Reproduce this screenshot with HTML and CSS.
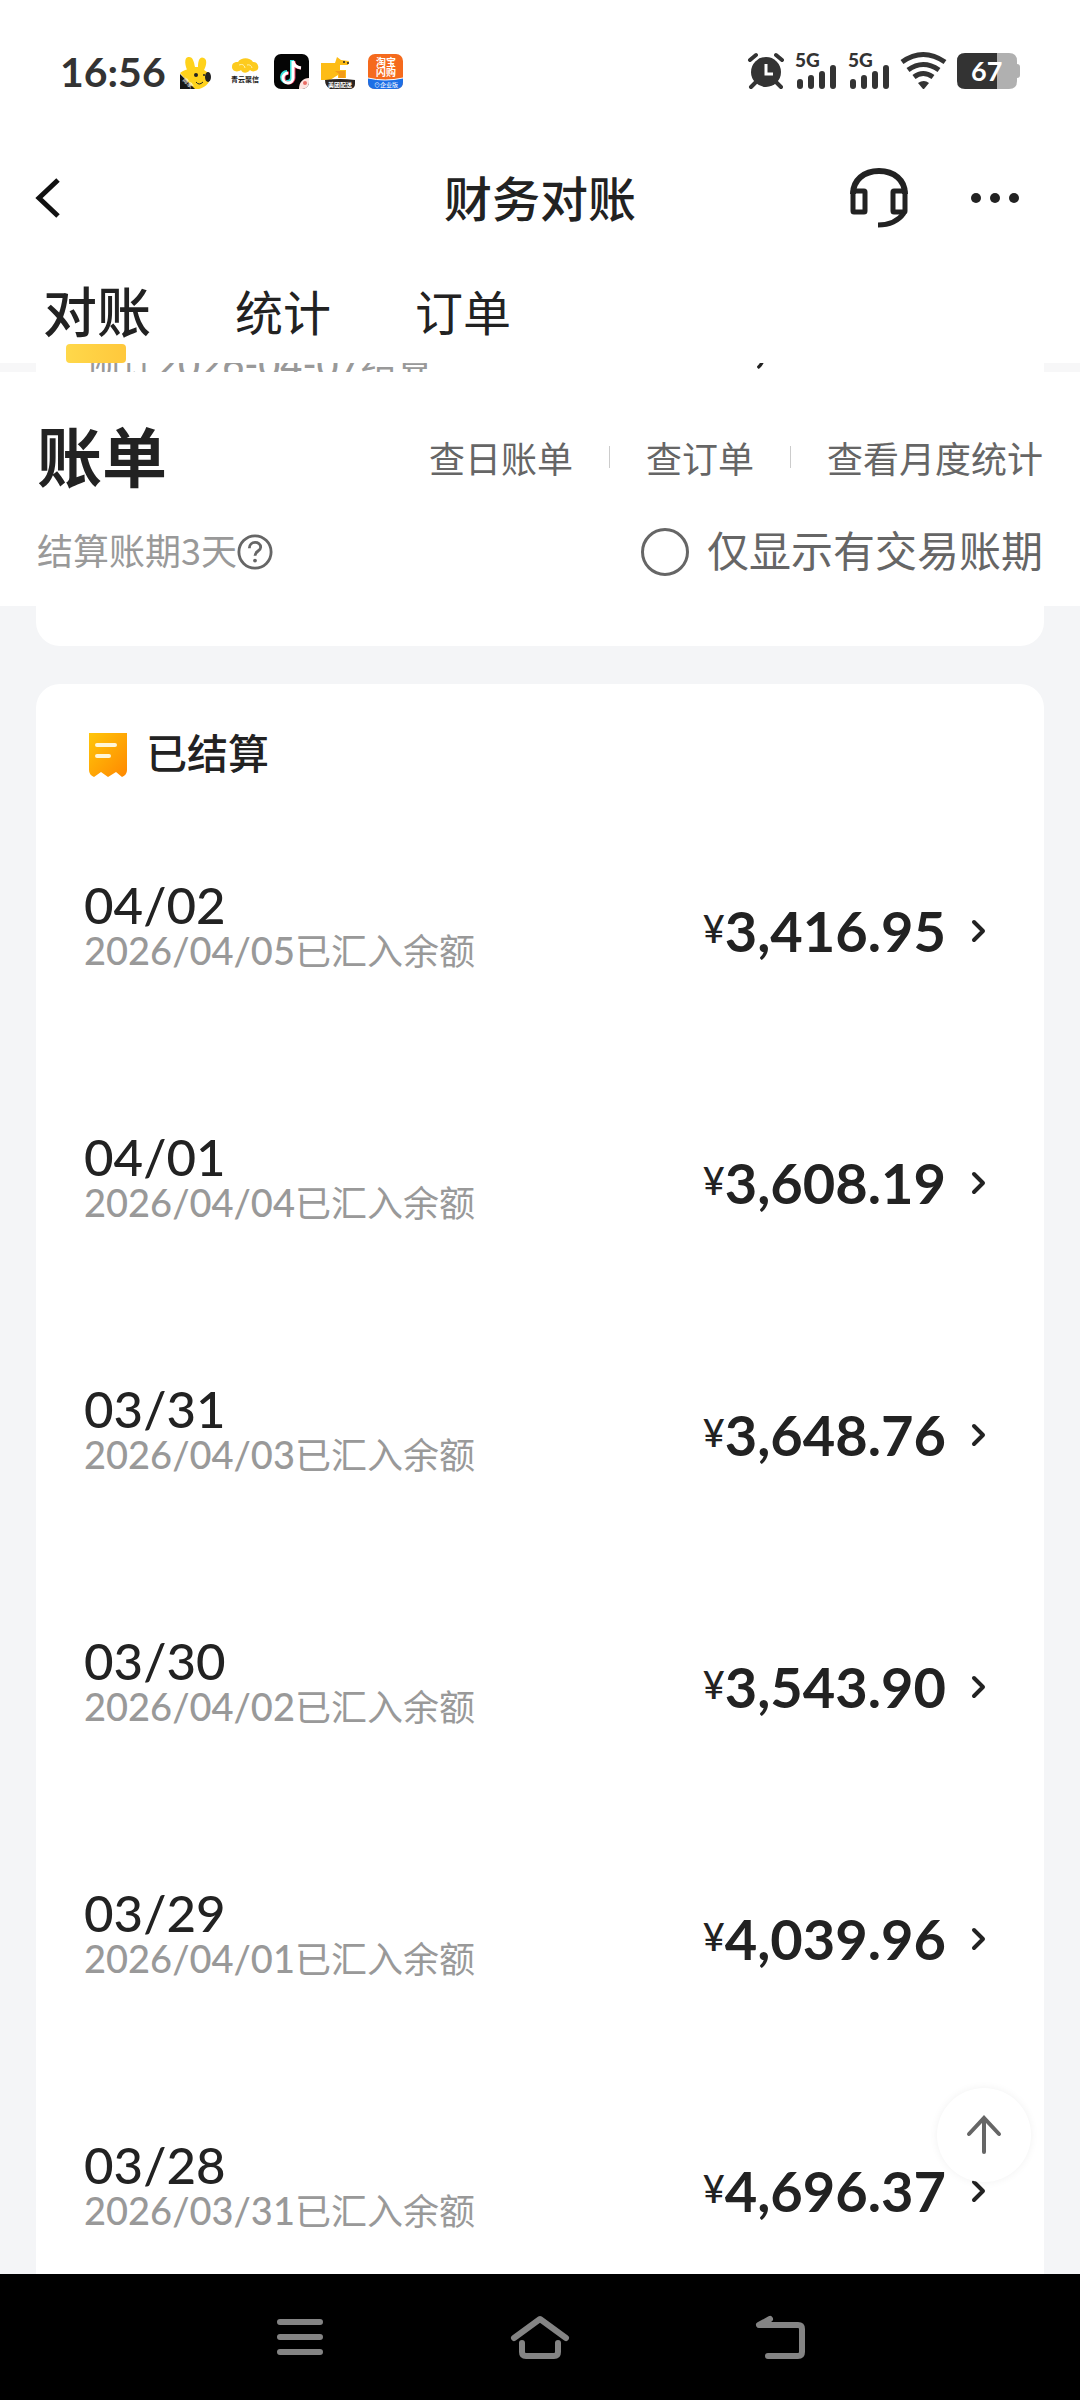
FILE: index.html
```html
<!DOCTYPE html>
<html lang="zh-CN">
<head>
    <meta charset="UTF-8">
    <meta name="viewport" content="width=device-width, initial-scale=1.0">
    <title>财务对账</title>
    <link rel="stylesheet" href="styles.css">
</head>
<body>

<!-- 状态栏 -->
<div class="status-bar">
    <span class="time">16:56</span>
    <div class="app-icons">
        <svg width="35" height="35" viewBox="0 0 35 35">
            <path d="M9 19C4 12 4 2 9 3c4 0 5 5 6 10h3C18 6 20 2 24 4c4 2 2 9-1 14z" fill="#ffd21c"/>
            <path d="M0 19c6-5 20-7 27-1 4 4 5 13-8 17h-5z" fill="#ffd21c"/>
            <ellipse cx="28" cy="23" rx="3" ry="5" fill="#222"/>
            <circle cx="16" cy="21" r="2" fill="#222"/>
            <circle cx="24" cy="21" r="1" fill="#222"/>
            <path d="M16 28q3 4 7 0" fill="none" stroke="#222" stroke-width="1"/>
            <path d="M0 20l15 15H0z" fill="#151515"/>
            <text x="2" y="27" font-size="6" fill="#fff" transform="rotate(45 3 27)">商家</text>
        </svg>
        <svg width="35" height="35" viewBox="0 0 35 35">
            <path d="M5 13c0-5 4-5 6-5 3-5 12-5 15 0 5-1 8 8 2 9-2 1-4 0-5-1-3 4-8 3-9 0-4 3-9 1-9-3z" fill="#fdcb1e"/>
            <path d="M12 11q5-2 6 3m2-3q4-1 5 3" fill="none" stroke="#fff1a8" stroke-width="1"/>
            <text x="4" y="28" font-size="7" font-weight="700" fill="#222">青云聚信</text>
        </svg>
        <svg width="35" height="35" viewBox="0 0 35 35">
            <rect width="35" height="35" rx="7" fill="#050505"/>
            <path d="M18 6v17a5 5 0 1 1-5-5" fill="none" stroke="#35e0dd" stroke-width="4"/>
            <path d="M20 7v17a5 5 0 1 1-5-5M20 8q1 6 7 6" fill="none" stroke="#f0365b" stroke-width="3"/>
            <path d="M19 7v17a5 5 0 1 1-5-5M19 7q1 6 8 7" fill="none" stroke="#fff" stroke-width="3"/>
            <path d="M25 35c0-7 4-11 10-11v4c0 4-3 7-7 7z" fill="#fde5e1"/>
            <circle cx="31" cy="29" r="2" fill="#ea6d65"/>
        </svg>
        <svg width="35" height="35" viewBox="0 0 35 35">
            <path d="M0 9h14l2-6 4 3 8 1-1 4h-8v5h6v8h-8v-3l-8 5H0z" fill="#fdbc16"/>
            <path d="M14 17h10v7h-6v-4z" fill="#f39b17"/>
            <circle cx="23" cy="8" r="1" fill="#222"/>
            <circle cx="27" cy="9" r="1" fill="#222"/>
            <path d="M4 26q15-2 30 0v4q0 5-6 5H9q-5-3-5-9z" fill="#2a2422"/>
            <text x="7" y="33" font-size="6" font-weight="700" fill="#fff">美团配送</text>
        </svg>
        <svg width="35" height="35" viewBox="0 0 35 35">
            <rect width="35" height="35" rx="7" fill="#f56a1d"/>
            <path d="M0 24q17 4 35 0v4q0 7-7 7H7q-7 0-7-7z" fill="#1d6fe6"/>
            <path d="M0 24q17 4 35 0" fill="none" stroke="#fff" stroke-width="1"/>
            <text x="8" y="12" font-size="10" font-weight="700" fill="#fff">淘宝</text>
            <text x="8" y="22" font-size="10" font-weight="700" fill="#fff">闪购</text>
            <text x="6" y="33" font-size="6" fill="#fff">⊙企业版</text>
        </svg>
    </div>
    <div class="sys-icons">
        <svg width="36" height="36" viewBox="0 0 36 36">
            <path d="M2 7l6-5M34 7l-6-5M3 34l6-6M33 34l-6-6" stroke="#333" stroke-width="4" stroke-linecap="round"/>
            <circle cx="18" cy="19" r="15" fill="#333"/>
            <path d="M18 11v10h7" fill="none" stroke="#fff" stroke-width="3"/>
        </svg>
        <svg width="42" height="36" viewBox="0 0 42 36">
            <text x="0" y="14" font-size="19" font-weight="900" fill="#333">5G</text>
            <path d="M5 29v4M16 25v8M27 21v12M38 15v18" stroke="#333" stroke-width="6" stroke-linecap="round"/>
        </svg>
        <svg width="42" height="36" viewBox="0 0 42 36">
            <text x="0" y="14" font-size="19" font-weight="900" fill="#333">5G</text>
            <path d="M5 29v4M16 25v8M27 21v12M38 15v18" stroke="#333" stroke-width="6" stroke-linecap="round"/>
        </svg>
        <svg width="45" height="36" viewBox="0 0 45 36">
            <path d="M1 9q21-15 43 0M7 17q15-11 31 0M13 24q9-7 19 0" fill="none" stroke="#333" stroke-width="5"/>
            <path d="M17 30q6-4 11 0l-5 6h-1z" fill="#333"/>
        </svg>
        <svg width="63" height="36" viewBox="0 0 63 36">
            <path d="M40 0h12q8 0 8 8v3q3 0 3 3v8q0 3-3 3v3q0 8-8 8H40z" fill="#b0b0b0"/>
            <path d="M8 0h32v36H8q-8 0-8-8V8q0-8 8-8z" fill="#333"/>
            <text x="14" y="28" font-size="27" font-weight="700" fill="#fff">67</text>
        </svg>
    </div>
</div>

<!-- 标题栏 -->
<header class="header">
    <button class="icon-btn" aria-label="返回">
        <svg width="24" height="40" viewBox="0 0 24 40"><path d="M22 2L3 20l19 18" fill="none" stroke="#111" stroke-width="5"/></svg>
    </button>
    <h1>财务对账</h1>
    <div class="header-actions">
        <button class="icon-btn" aria-label="客服">
            <svg width="58" height="60" viewBox="0 0 58 60" fill="none" stroke="#222">
                <path d="M3 26C3 12 14 3 29 3s26 9 26 23" stroke-width="6"/>
                <rect x="3" y="23" width="12" height="21" rx="1" stroke-width="5"/>
                <rect x="43" y="23" width="12" height="21" rx="1" stroke-width="5"/>
                <path d="M54 45c-5 7-14 12-26 12" stroke-width="5"/>
            </svg>
        </button>
        <button class="icon-btn" aria-label="更多">
            <svg width="50" height="12" viewBox="0 0 50 12" fill="#222"><circle cx="6" cy="6" r="5"/><circle cx="25" cy="6" r="5"/><circle cx="44" cy="6" r="5"/></svg>
        </button>
    </div>
</header>

<!-- 标签页 -->
<nav class="tabs">
    <button class="tab active">对账</button>
    <button class="tab">统计</button>
    <button class="tab">订单</button>
</nav>

<!-- 被遮住的上一行 -->
<div class="peek">
    <div class="card">
        <div class="row">
            <div class="info">
                <span class="date">04/04</span>
                <span class="note">预计<span class="num">2026-04-07</span>结算</span>
            </div>
            <div class="amount"><small>¥</small>4,168.30</div>
        </div>
    </div>
</div>

<section class="bill-head">
    <div class="bill-top">
        <h2>账单</h2>
        <div class="links">
            <a href="#">查日账单</a>
            <a href="#">查订单</a>
            <a href="#">查看月度统计</a>
        </div>
    </div>
    <div class="bill-sub">
        <div class="period">
            <span class="text">结算账期3天</span>
            <button class="icon-btn" aria-label="说明">
                <svg width="36" height="36" viewBox="0 0 38 38" fill="none" stroke="#666" stroke-width="3">
                    <circle cx="19" cy="19" r="17"/>
                    <path d="M13 15c0-8 12-8 12-1 0 4-6 4-6 9"/>
                    <circle cx="19" cy="28" r="2" fill="#666" stroke="none"/>
                </svg>
            </button>
        </div>
        <label class="only-trade" for="onlyTrade">
            <input type="checkbox" id="onlyTrade">
            <span class="text">仅显示有交易账期</span>
        </label>
    </div>
</section>

<!-- 账单列表 -->
<main class="content">
    <div class="card card-end"></div>
    <div class="card">
        <div class="card-title">
            <svg width="40" height="46" viewBox="0 0 40 46">
                <defs>
                    <linearGradient id="receipt" x1="0" y1="0" x2="1" y2="1">
                        <stop offset="0" stop-color="#ffc60a"/>
                        <stop offset="1" stop-color="#ff8800"/>
                    </linearGradient>
                </defs>
                <path d="M1 1h38v37q0 5-5 7l-6-5-8 5-7-5-7 5q-5-2-5-7z" fill="url(#receipt)"/>
                <path d="M9 13h18M9 24h12" stroke="#fff6d8" stroke-width="4" stroke-linecap="round"/>
            </svg>
            <h3>已结算</h3>
        </div>
        <a class="row" href="#">
            <div class="info">
                <span class="date">04/02</span>
                <span class="note"><span class="num">2026/04/05</span>已汇入余额</span>
            </div>
            <div class="amount"><small>¥</small>3,416.95</div>
            <svg class="arrow" width="16" height="24" viewBox="0 0 16 24"><path d="M3 3l9 9-9 9"/></svg>
        </a>
        <a class="row" href="#">
            <div class="info">
                <span class="date">04/01</span>
                <span class="note"><span class="num">2026/04/04</span>已汇入余额</span>
            </div>
            <div class="amount"><small>¥</small>3,608.19</div>
            <svg class="arrow" width="16" height="24" viewBox="0 0 16 24"><path d="M3 3l9 9-9 9"/></svg>
        </a>
        <a class="row" href="#">
            <div class="info">
                <span class="date">03/31</span>
                <span class="note"><span class="num">2026/04/03</span>已汇入余额</span>
            </div>
            <div class="amount"><small>¥</small>3,648.76</div>
            <svg class="arrow" width="16" height="24" viewBox="0 0 16 24"><path d="M3 3l9 9-9 9"/></svg>
        </a>
        <a class="row" href="#">
            <div class="info">
                <span class="date">03/30</span>
                <span class="note"><span class="num">2026/04/02</span>已汇入余额</span>
            </div>
            <div class="amount"><small>¥</small>3,543.90</div>
            <svg class="arrow" width="16" height="24" viewBox="0 0 16 24"><path d="M3 3l9 9-9 9"/></svg>
        </a>
        <a class="row" href="#">
            <div class="info">
                <span class="date">03/29</span>
                <span class="note"><span class="num">2026/04/01</span>已汇入余额</span>
            </div>
            <div class="amount"><small>¥</small>4,039.96</div>
            <svg class="arrow" width="16" height="24" viewBox="0 0 16 24"><path d="M3 3l9 9-9 9"/></svg>
        </a>
        <a class="row" href="#">
            <div class="info">
                <span class="date">03/28</span>
                <span class="note"><span class="num">2026/03/31</span>已汇入余额</span>
            </div>
            <div class="amount"><small>¥</small>4,696.37</div>
            <svg class="arrow" width="16" height="24" viewBox="0 0 16 24"><path d="M3 3l9 9-9 9"/></svg>
        </a>
    </div>
    <button class="to-top" aria-label="回到顶部">
        <svg width="36" height="40" viewBox="0 0 36 40" fill="none" stroke="#666" stroke-width="4" stroke-linecap="round"><path d="M18 37V3M3 19L18 3l15 16"/></svg>
    </button>
</main>

<!-- 系统导航 -->
<footer class="nav-bar">
    <button class="icon-btn" aria-label="菜单">
        <svg width="46" height="44" viewBox="0 0 46 44"><path d="M3 7h40M3 22h40M3 37h40"/></svg>
    </button>
    <button class="icon-btn" aria-label="主页">
        <svg width="58" height="44" viewBox="0 0 58 44"><path d="M3 23L29 4l26 19M11 28v9q0 4 4 4h28q4 0 4-4v-9"/></svg>
    </button>
    <button class="icon-btn" aria-label="后退">
        <svg width="50" height="44" viewBox="0 0 50 44"><path d="M15 4L4 10h39q4 0 4 4v23q0 4-4 4H13"/></svg>
    </button>
</footer>

</body>
</html>
```

FILE: styles.css
```css
* {
    box-sizing: border-box;
}

body {
    margin: 0;
    height: 100vh;
    display: flex;
    flex-direction: column;
    background-color: #fff;
    color: #222;
    font-family: Lato, "Noto Sans CJK SC", sans-serif;
    overflow: hidden;
}

h1, h2, h3 {
    margin: 0;
}

button {
    padding: 0;
    border: none;
    background: none;
    color: inherit;
    font-family: inherit;
    cursor: pointer;
}

a {
    color: inherit;
    text-decoration: none;
}

svg {
    display: block;
    flex-shrink: 0;
    overflow: visible;
}

.icon-btn {
    display: flex;
    align-items: center;
    justify-content: center;
}

/* 状态栏 */
.status-bar {
    display: flex;
    align-items: center;
    height: 142px;
    padding: 0 60px;
    flex-shrink: 0;
}

.time {
    width: 120px;
    font-size: 41px;
    font-weight: 700;
    color: #333;
}

.app-icons {
    display: flex;
    gap: 12px;
}

.sys-icons {
    display: flex;
    gap: 11px;
    margin-left: auto;
}

/* 标题栏 */
.header {
    display: grid;
    grid-template-columns: 1fr auto 1fr;
    align-items: center;
    height: 112px;
    padding: 0 60px 0 36px;
    flex-shrink: 0;
}

.header .icon-btn {
    justify-self: start;
}

.header h1 {
    padding: 0 0 4px 24px;
    font-size: 48px;
    font-weight: 500;
}

.header-actions {
    display: flex;
    justify-content: flex-end;
    gap: 62px;
}

/* 标签页 */
.tabs {
    display: flex;
    align-items: center;
    gap: 84px;
    height: 109px;
    padding: 8px 43px 0;
    flex-shrink: 0;
}

.tab {
    position: relative;
    font-size: 48px;
    line-height: 100px;
}

.tab.active {
    font-size: 54px;
    font-weight: 500;
}

.tab.active::after {
    content: "";
    position: absolute;
    left: 23px;
    bottom: 0;
    width: 60px;
    height: 19px;
    border-radius: 4px;
    background: linear-gradient(90deg, #ffd84a, #ffc83c);
}

.peek {
    height: 9px;
    padding: 0 36px;
    background-color: #f7f7f8;
    overflow: hidden;
    flex-shrink: 0;
}

.peek .card {
    margin-top: -145px;
}

.peek .amount {
    margin-right: 44px;
    padding-bottom: 12px;
}

/* 账单头部 */
.bill-head {
    display: flex;
    flex-direction: column;
    gap: 24px;
    padding: 45px 37px 24px;
    flex-shrink: 0;
}

.bill-top,
.bill-sub {
    display: flex;
    align-items: center;
    justify-content: space-between;
}

.bill-top {
    height: 80px;
}

.bill-sub {
    height: 61px;
}

.bill-sub .text {
    padding-bottom: 6px;
}

.bill-top h2 {
    font-size: 65px;
    font-weight: 700;
    line-height: 80px;
}

.links {
    display: flex;
    align-items: center;
    font-size: 36px;
    color: #666;
}

.links a + a {
    display: flex;
    align-items: center;
}

.links a + a::before {
    content: "";
    width: 1px;
    height: 22px;
    margin: 0 36px;
    background-color: #ccc;
}

.period {
    display: flex;
    align-items: center;
    font-family: "Noto Sans CJK SC", sans-serif;
    font-size: 36px;
    color: #999;
}

.only-trade {
    display: flex;
    align-items: center;
    gap: 18px;
    font-size: 42px;
    color: #666;
}

.only-trade input {
    appearance: none;
    width: 48px;
    height: 48px;
    margin: 0;
    border: 3px solid #666;
    border-radius: 50%;
}

.only-trade input:checked {
    background-color: #ffd100;
}

/* 列表 */
.content {
    position: relative;
    flex: 1;
    min-height: 0;
    padding: 0 36px;
    background-color: #f4f5f7;
    overflow: hidden;
}

.card {
    background-color: #fff;
    border-radius: 24px;
}

.card-end {
    height: 40px;
    margin-bottom: 38px;
    border-radius: 0 0 24px 24px;
}

.card-title {
    display: flex;
    align-items: center;
    gap: 18px;
    height: 121px;
    padding: 20px 52px 0;
}

.card-title h3 {
    padding-bottom: 2px;
    font-size: 41px;
    font-weight: 500;
    line-height: 48px;
}

.row {
    display: flex;
    align-items: center;
    height: 252px;
    padding: 0 57px 0 48px;
}

.info {
    display: flex;
    flex-direction: column;
    flex: 1;
    padding-bottom: 10px;
}

.date {
    font-size: 51px;
    font-weight: 500;
    line-height: 48px;
}

.note {
    font-size: 36px;
    line-height: 42px;
    color: #999;
}

.num {
    font-size: 38px;
    font-weight: 500;
}

.amount {
    padding-bottom: 4px;
    font-size: 56px;
    font-weight: 700;
    line-height: 60px;
}

.amount small {
    font-size: 38px;
    font-weight: 500;
    vertical-align: 9px;
}

.arrow {
    margin-left: 25px;
    fill: none;
    stroke: #222;
    stroke-width: 4;
    stroke-linecap: round;
    stroke-linejoin: round;
}

.to-top {
    position: absolute;
    right: 49px;
    bottom: 92px;
    display: flex;
    align-items: center;
    justify-content: center;
    width: 94px;
    height: 94px;
    border-radius: 50%;
    background-color: #fff;
    box-shadow: 0 0 8px rgba(0, 0, 0, 0.06);
}

/* 系统导航 */
.nav-bar {
    display: grid;
    grid-template-columns: repeat(3, 1fr);
    height: 126px;
    padding: 0 180px;
    background-color: #000;
    flex-shrink: 0;
}

.nav-bar svg {
    fill: none;
    stroke: #848484;
    stroke-width: 6;
    stroke-linecap: round;
    stroke-linejoin: round;
}
```
